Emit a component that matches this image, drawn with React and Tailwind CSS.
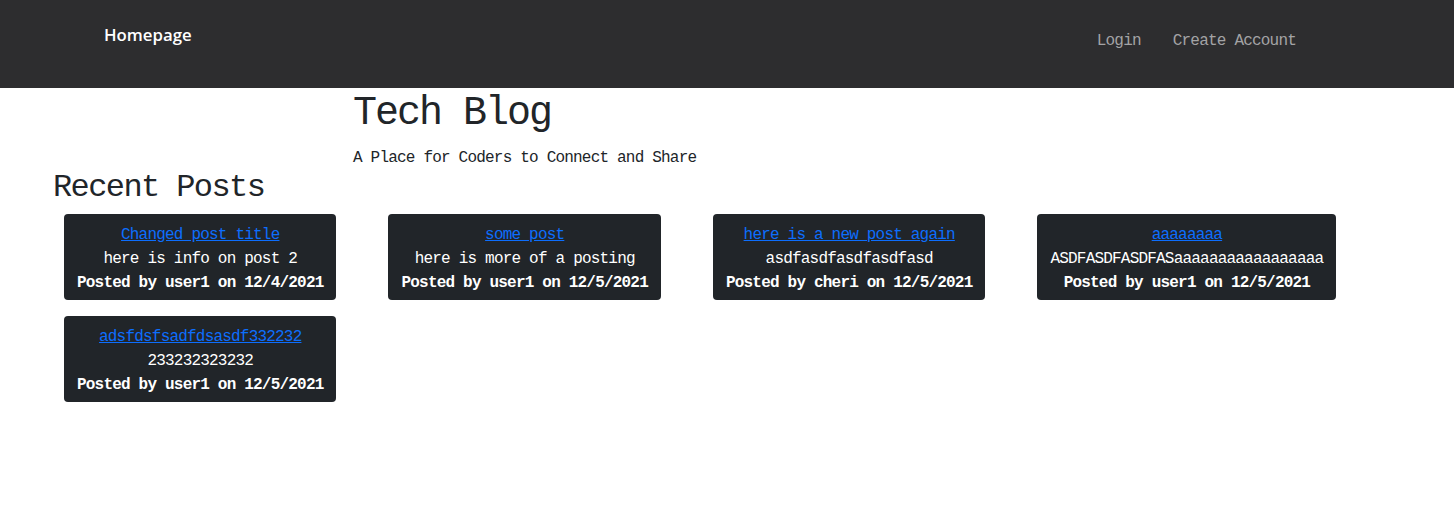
import React from "react";

const posts = [
  { title: "Changed post title", body: "here is info on post 2", user: "user1", date: "12/4/2021" },
  { title: "some post", body: "here is more of a posting", user: "user1", date: "12/5/2021" },
  { title: "here is a new post again", body: "asdfasdfasdfasdfasd", user: "cheri", date: "12/5/2021" },
  { title: "aaaaaaaa", body: "ASDFASDFASDFASaaaaaaaaaaaaaaaaa", user: "user1", date: "12/5/2021" },
  { title: "adsfdsfsadfdsasdf332232", body: "233232323232", user: "user1", date: "12/5/2021" },
];

const mono = { fontFamily: '"Liberation Mono", "DejaVu Sans Mono", monospace' };

export default function App() {
  return (
    <div className="min-h-[517px] bg-white text-[#212529]" style={mono}>
      <nav className="h-[88px] bg-[#2d2d2f] flex items-start justify-between pl-[104px] pr-[158px]">
        <a
          className="mt-[22px] text-[16.8px] leading-[26px] font-semibold text-white"
          style={{ fontFamily: '"Open Sans", "Noto Sans", sans-serif' }}
        >
          Homepage
        </a>
        <div className="flex gap-[32px] mt-[29px] text-[16px] leading-[24px] tracking-[-0.8px] text-[#a3a3a5]">
          <a>Login</a>
          <a>Create Account</a>
        </div>
      </nav>
      <header className="pl-[353px] pt-[2px]">
        <h1 className="text-[40px] leading-[48px] tracking-[-2px] font-normal">Tech Blog</h1>
        <p className="mt-[8px] text-[16px] leading-[24px] tracking-[-0.8px]">
          A Place for Coders to Connect and Share
        </p>
      </header>
      <h2 className="pl-[53px] text-[32px] leading-[36px] tracking-[-1.6px] font-normal">Recent Posts</h2>
      <div className="flex flex-wrap pl-[38px]">
        {posts.map((p, i) => (
          <div
            key={i}
            className="mx-[26px] my-[8px] bg-[#212529] rounded-[4px] px-[13px] pt-[9px] pb-[5px] text-center text-white text-[16px] leading-[24px] tracking-[-0.8px]"
          >
            <div>
              <a className="text-[#0d6efd] underline">{p.title}</a>
            </div>
            <div>{p.body}</div>
            <div className="font-bold">
              Posted by {p.user} on {p.date}
            </div>
          </div>
        ))}
      </div>
    </div>
  );
}
